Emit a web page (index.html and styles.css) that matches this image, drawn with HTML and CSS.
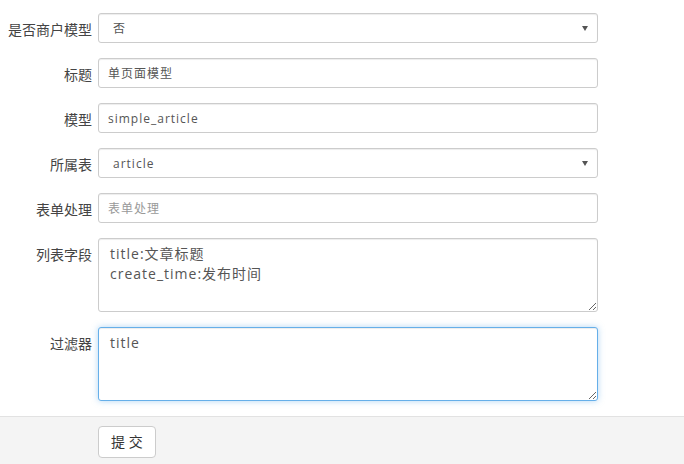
FILE: index.html
```html
<!DOCTYPE html>
<html lang="zh-CN">
<head>
<meta charset="utf-8">
<title>模型</title>
<link rel="stylesheet" href="styles.css">
</head>
<body>
<form class="form">
  <div class="form-body">
    <div class="row">
      <label class="lbl">是否商户模型</label>
      <div class="select-wrap">
        <select class="ctl sel"><option>否</option><option>是</option></select>
      </div>
    </div>
    <div class="row">
      <label class="lbl">标题</label>
      <input class="ctl" type="text" value="单页面模型">
    </div>
    <div class="row">
      <label class="lbl">模型</label>
      <input class="ctl" type="text" value="simple_article">
    </div>
    <div class="row">
      <label class="lbl">所属表</label>
      <div class="select-wrap">
        <select class="ctl sel"><option>article</option></select>
      </div>
    </div>
    <div class="row">
      <label class="lbl">表单处理</label>
      <input class="ctl" type="text" placeholder="表单处理">
    </div>
    <div class="row">
      <label class="lbl">列表字段</label>
      <textarea class="ctl area">title:文章标题
create_time:发布时间</textarea>
    </div>
    <div class="row">
      <label class="lbl">过滤器</label>
      <textarea class="ctl area is-focused">title</textarea>
    </div>
  </div>
  <div class="footer">
    <button class="btn" type="button">提 交</button>
  </div>
</form>
</body>
</html>
```
FILE: styles.css
```css
html, body {
  margin: 0;
  padding: 0;
  background: #fff;
}

body {
  font-family: "Open Sans", "Noto Sans CJK SC", sans-serif;
  color: #333;
}

.form {
  margin: 0;
}

.form-body {
  display: flex;
  flex-direction: column;
  gap: 15px;
  padding: 13px 0 15px;
}

.row {
  display: flex;
  align-items: flex-start;
}

.lbl {
  box-sizing: border-box;
  width: 98px;
  flex: none;
  padding: 7px 6px 0 0;
  text-align: right;
  font-size: 14px;
  line-height: 20px;
  color: #444;
  white-space: nowrap;
}

.ctl {
  box-sizing: border-box;
  width: 500px;
  height: 30px;
  margin: 0;
  padding: 0 9px;
  border: 1px solid #ccc;
  border-radius: 3px;
  background: #fff;
  color: #555;
  font-family: "Open Sans", "Noto Sans CJK SC", sans-serif;
  font-size: 12px;
  letter-spacing: 1px;
  box-shadow: inset 0 1px 1px rgba(0, 0, 0, 0.075);
  outline: none;
}

.ctl::placeholder {
  color: #999;
}

.select-wrap {
  position: relative;
  width: 500px;
}

.select-wrap::after {
  content: "";
  position: absolute;
  right: 10px;
  top: 13px;
  width: 0;
  height: 0;
  border-left: 3px solid transparent;
  border-right: 3px solid transparent;
  border-top: 5px solid #555;
  pointer-events: none;
}

.sel {
  appearance: none;
  -webkit-appearance: none;
  padding-left: 14px;
}

.area {
  height: 74px;
  padding: 5px 11px;
  font-size: 14px;
  line-height: 20px;
  resize: vertical;
}

.is-focused {
  border-color: #66afe9;
  box-shadow: inset 0 1px 1px rgba(0, 0, 0, 0.075), 0 0 6px rgba(102, 175, 233, 0.5);
}

.footer {
  background: #f4f4f4;
  border-top: 1px solid #e2e2e2;
  padding: 9px 0 12px 98px;
}

.btn {
  box-sizing: border-box;
  height: 32px;
  padding: 0 12px;
  border: 1px solid #ccc;
  border-radius: 4px;
  background: #fff;
  color: #333;
  font-family: "Open Sans", "Noto Sans CJK SC", sans-serif;
  font-size: 14px;
  line-height: 20px;
}
```
